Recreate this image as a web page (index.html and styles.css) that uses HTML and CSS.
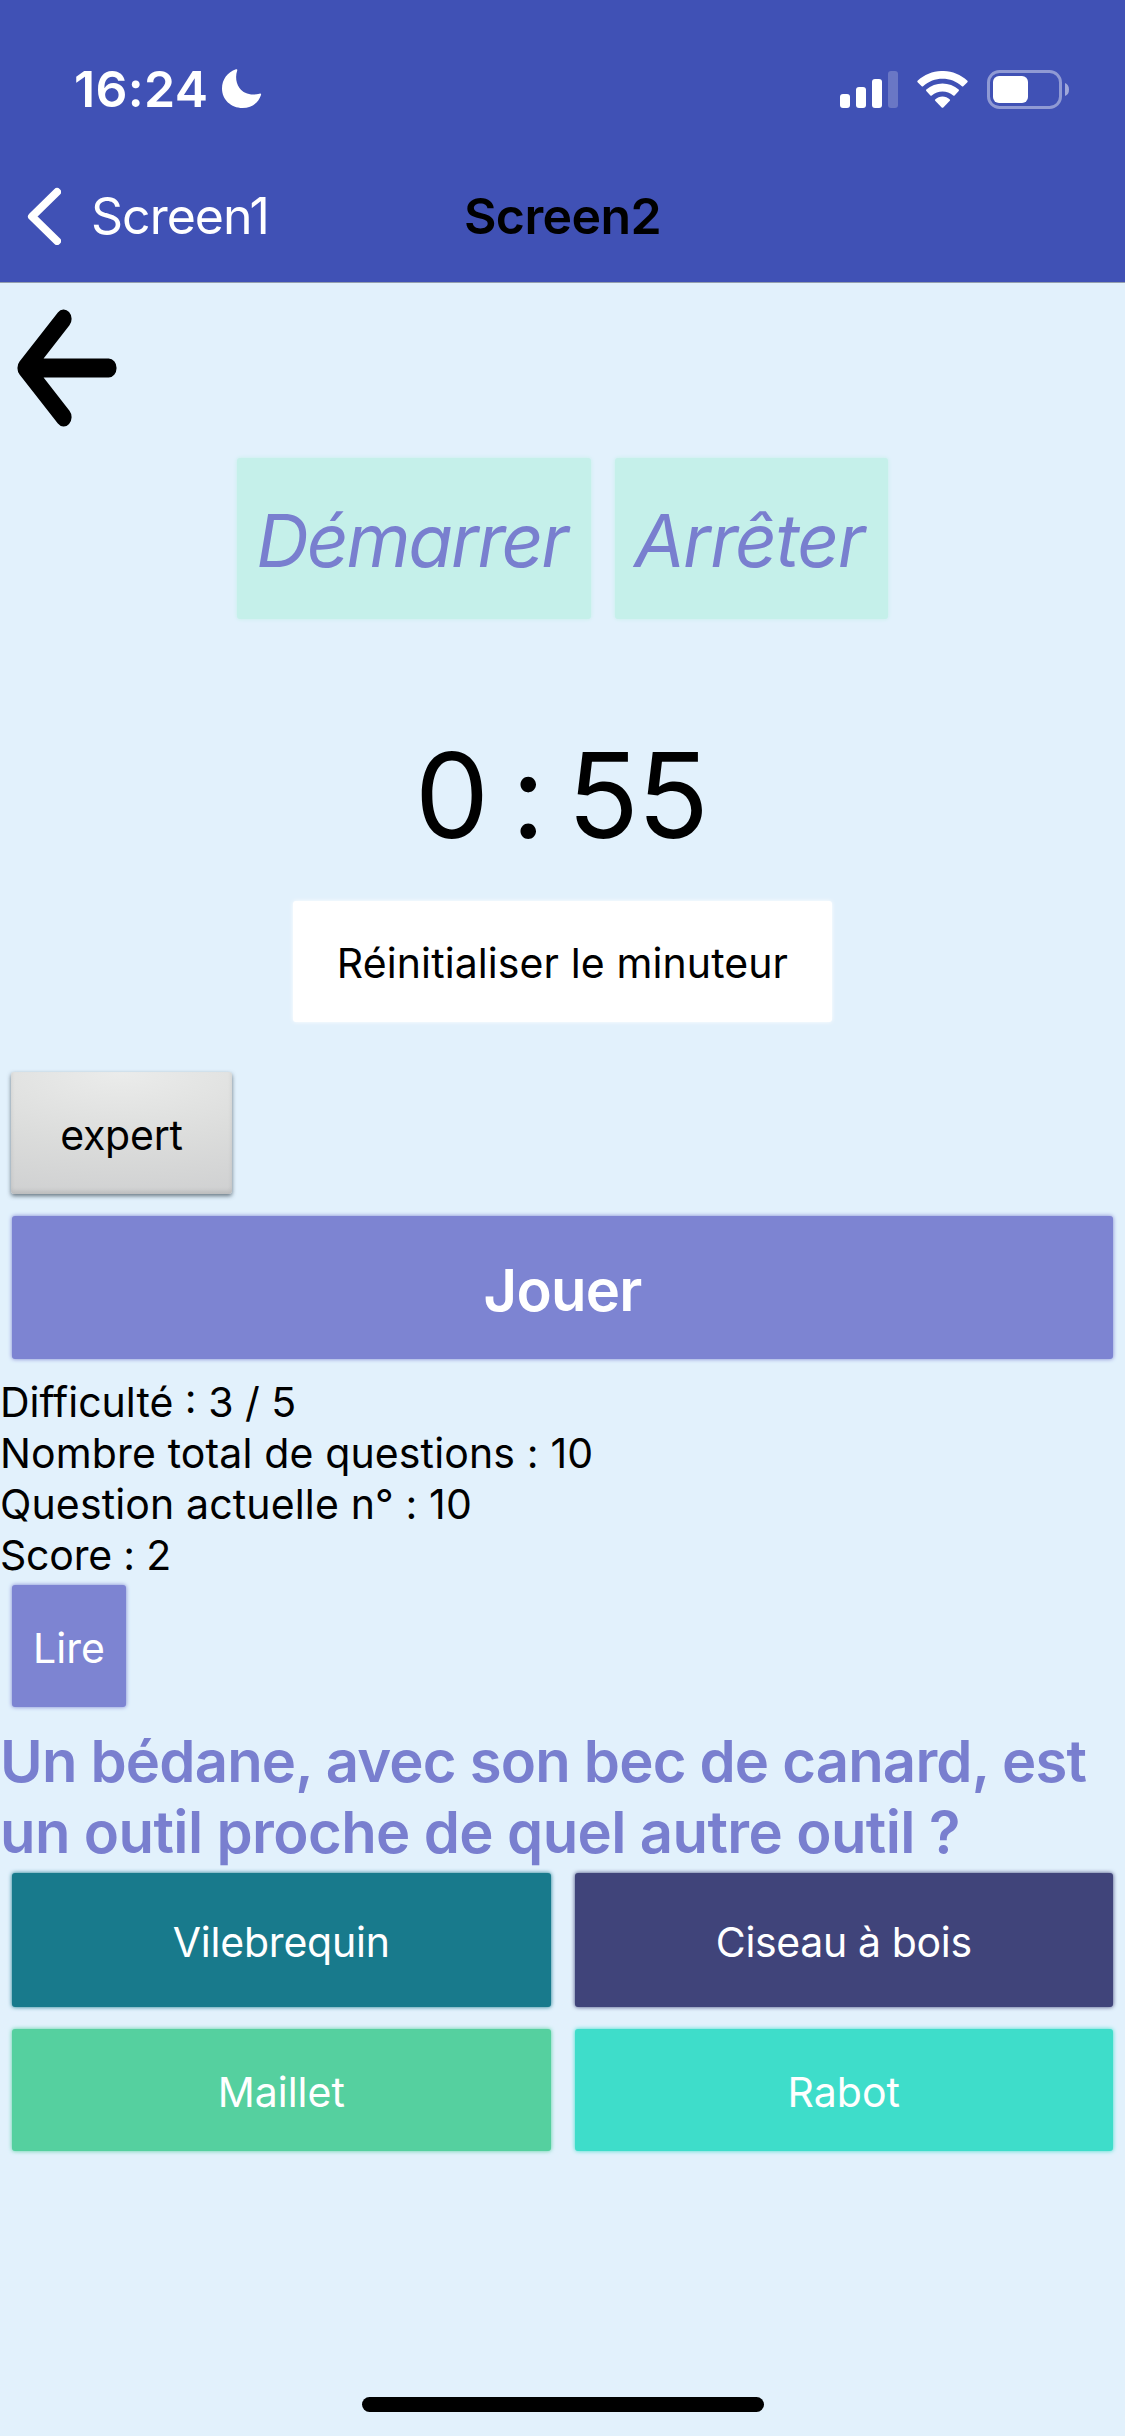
FILE: index.html
```html
<!DOCTYPE html>
<html lang="fr">
<head>
  <meta charset="UTF-8">
  <title>Screen2</title>
  <link rel="stylesheet" href="styles.css">
</head>
<body>
  <div class="header">
    <div class="status">
      <div class="status-left">
        <span class="heure">16:24</span>
        <svg class="lune" width="40" height="40" viewBox="0 0 40 40">
          <path d="M14 0.3C15 0 15.600 0.500 15.200 1.500C13.300 7 13.800 14 17.500 19C21.500 24.500 29 27 37.500 24.700C38.800 24.300 39.400 24.900 39 26C36.500 33.800 29.500 39 20.500 39C9 39 0 30.500 0 19.500C0 10.500 5.500 3 14 0.300Z" fill="#fff"/>
        </svg>
      </div>
      <div class="status-right">
        <svg width="58" height="37" viewBox="0 0 58 37" fill="#fff">
          <rect x="0" y="23" width="10" height="14" rx="3"/>
          <rect x="16" y="16" width="10" height="21" rx="3"/>
          <rect x="32" y="8" width="10" height="29" rx="3"/>
          <rect x="48" y="0" width="10" height="37" rx="3" opacity=".22"/>
        </svg>
        <svg class="wifi" width="51" height="37" viewBox="0 0 51 37" fill="#fff">
          <path d="M0.600 9.800C14.500 -3.300 36.500 -3.300 50.400 9.800Q51 10.500 50.400 11.200L46.300 15.200Q45.600 15.800 44.900 15.200C34 5.300 17 5.300 6.100 15.200Q5.400 15.800 4.700 15.200L0.600 11.200Q0 10.500 0.600 9.800Z"/>
          <path d="M9.300 18.600C18.300 10.600 32.700 10.600 41.700 18.600Q42.300 19.300 41.700 20L37.600 24.400Q37 25 36.200 24.400C30.200 19.200 20.800 19.200 14.800 24.400Q14 25 13.400 24.400L9.300 20Q8.700 19.300 9.300 18.600Z"/>
          <path d="M18.200 28.400C22.300 24.500 28.700 24.500 32.800 28.400Q33.400 29.100 32.800 29.800L26.300 36.500Q25.500 37.200 24.700 36.500L18.200 29.800Q17.600 29.100 18.200 28.400Z"/>
        </svg>
        <svg class="batterie" width="82" height="39" viewBox="0 0 82 39" fill="#fff">
          <rect x="1.500" y="1.500" width="72" height="36" rx="11" fill="none" stroke="#fff" stroke-width="3" opacity=".42"/>
          <rect x="6" y="6" width="35" height="27" rx="6"/>
          <path d="M78 13Q82 14.500 82 19.500T78 26Z" opacity=".5"/>
        </svg>
      </div>
    </div>
    <div class="navbar">
      <div class="retour">
        <svg width="34" height="58" viewBox="0 0 34 58">
          <path d="M30 5L5 29.500L30 54" fill="none" stroke="#fff" stroke-width="8" stroke-linecap="round" stroke-linejoin="round"/>
        </svg>
        <span>Screen1</span>
      </div>
      <div class="titre">Screen2</div>
      <div></div>
    </div>
  </div>

  <div class="container">
    <svg class="fleche" width="100" height="118" viewBox="0 0 120 119" preserveAspectRatio="none">
      <path d="M56 10L10 59.500L56 109M10 59.500H110" fill="none" stroke="#000" stroke-width="19" stroke-linecap="round" stroke-linejoin="round"/>
    </svg>

    <div class="commandes">
      <button class="btn demarrer">Démarrer</button>
      <button class="btn arreter">Arrêter</button>
    </div>

    <div class="minuteur">0 : 55</div>
    <button class="btn reset">Réinitialiser le minuteur</button>
    <button class="btn expert">expert</button>
    <button class="btn jouer">Jouer</button>

    <div class="infos">
      <div class="difficulte">Difficulté : 3 / 5</div>
      <div class="total">Nombre total de questions : 10</div>
      <div class="actuelle">Question actuelle n° : 10</div>
      <div class="score">Score : 2</div>
    </div>

    <button class="btn lire">Lire</button>
    <div class="question">
      <div>Un bédane, avec son bec de canard, est</div>
      <div class="suite">un outil proche de quel autre outil ?</div>
    </div>

    <div class="reponses">
      <button class="btn rep-a">Vilebrequin</button>
      <button class="btn rep-b">Ciseau à bois</button>
      <button class="btn rep-c">Maillet</button>
      <button class="btn rep-d">Rabot</button>
    </div>
  </div>

  <div class="home-bar"></div>
</body>
</html>
```
FILE: styles.css
```css
* { box-sizing: border-box; }
body { font-family: Inter, "Liberation Sans", sans-serif; margin: 0; height: 2436px; background: #e2f1fc; color: #000; display: flex; flex-direction: column; overflow: hidden; }

.header { height: 283px; background: #4051b5; border-bottom: 1px solid #949fae; }
.status { height: 150px; padding: 28px 56px 0 74px; display: flex; justify-content: space-between; align-items: center; }
.status-left, .status-right { display: flex; align-items: center; }
.heure { font-size: 50px; font-weight: 600; width: 148px; color: #fff; white-space: nowrap; letter-spacing: 0.3px; }
.wifi { margin-left: 19px; }
.batterie { margin-left: 19px; }
.navbar { height: 132px; display: grid; grid-template-columns: 1fr auto 1fr; align-items: center; font-size: 50px; }
.retour { display: flex; align-items: center; gap: 30px; padding-left: 27px; color: #fff; letter-spacing: -1px; }
.titre { font-weight: 600; letter-spacing: -0.6px; }

.container { flex: 1; display: flex; flex-direction: column; align-items: flex-start; }
.fleche { margin: 26px 0 0 17px; }
.btn { font-family: inherit; font-size: 41px; color: #fff; border: 0; border-radius: 3px; padding: 3px 0 0; white-space: nowrap; }
.commandes { display: flex; gap: 24px; margin-top: 31px; align-self: center; }
.commandes .btn { height: 161px; padding-right: 5px; font-size: 73px; font-style: italic; color: #797fcf; background: #c5f0ea; box-shadow: 0 0 4px #c5f0ea; }
.commandes .demarrer { width: 354px; letter-spacing: -2.2px; }
.commandes .arreter { width: 273px; letter-spacing: -1.5px; }
.minuteur { align-self: center; margin-top: 105px; padding-right: 3px; font-size: 118px; line-height: 142px; letter-spacing: -1.8px; word-spacing: -7.5px; }
.reset { align-self: center; width: 539px; height: 121px; margin-top: 35px; background: #fff; color: #000; letter-spacing: 0.1px; box-shadow: 0 0 4px #fff; }
.expert { width: 221px; height: 122px; margin: 50px 0 0 11px; color: #000; letter-spacing: -0.2px; background: radial-gradient(ellipse 160% 110% at 50% 0, #ebeceb, #dcdddc 50%, #cecfd0 100%); box-shadow: 0 2px 4px rgba(60, 75, 85, .75), inset 0 -3px 4px rgba(0, 0, 0, .1); }
.jouer { width: 1101px; height: 143px; margin: 22px 0 0 12px; padding-top: 4px; font-size: 58px; font-weight: 600; letter-spacing: -0.8px; background: #7d84d2; box-shadow: 0 0 4px #7d84d2; }

.infos { margin-top: 18px; font-size: 41px; line-height: 51px; }
.total, .actuelle { letter-spacing: 0.14px; }
.score { letter-spacing: -0.2px; }
.lire { width: 114px; height: 122px; margin: 4px 0 0 12px; background: #7d84d2; box-shadow: 0 0 4px #7d84d2; }
.question { margin-top: 19px; font-size: 58px; line-height: 71px; font-weight: 600; color: #797fcf; white-space: nowrap; letter-spacing: -0.8px; }
.suite { letter-spacing: -0.6px; }

.reponses { width: 100%; display: grid; grid-template-columns: 1fr 1fr; grid-template-rows: 134px 122px; gap: 22px 24px; padding: 0 12px; margin-top: 5px; }
.rep-a { background: #187a8c; box-shadow: 0 0 4px #187a8c; letter-spacing: -0.2px; }
.rep-b { background: #40447a; box-shadow: 0 0 4px #40447a; letter-spacing: -0.35px; }
.rep-c { background: #55d09f; box-shadow: 0 0 4px #55d09f; }
.rep-d { background: #3eddca; box-shadow: 0 0 4px #3eddca; }

.home-bar { width: 402px; height: 15px; margin: 0 auto 24px; border-radius: 8px; background: #000; }
```
